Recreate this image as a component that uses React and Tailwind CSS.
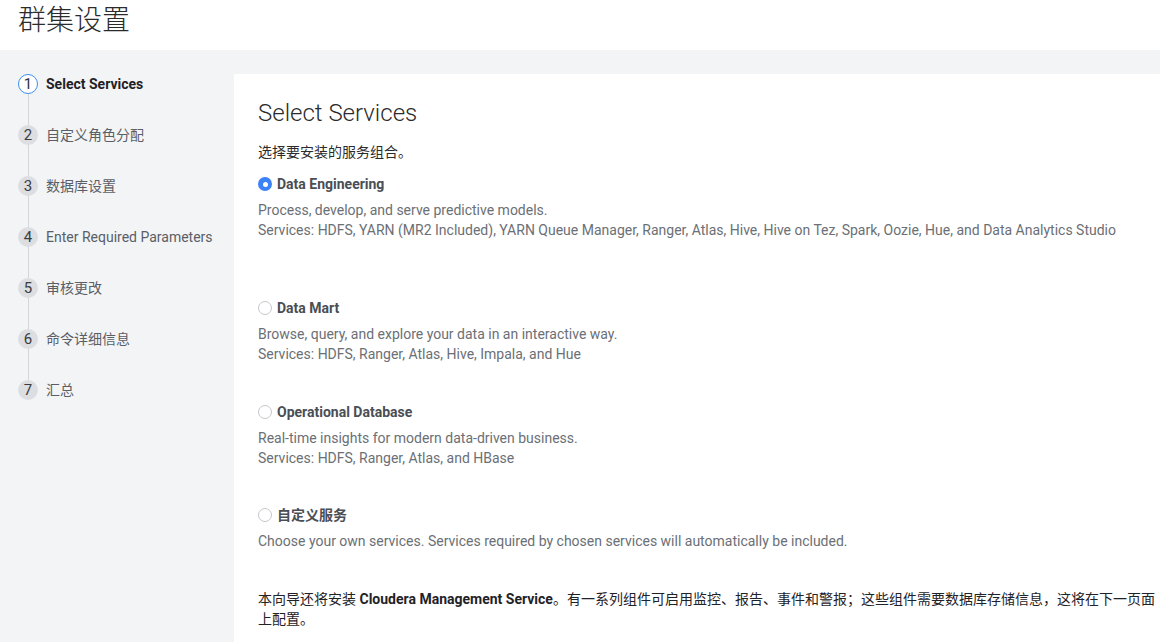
const steps = [
  { n: 1, label: 'Select Services', active: true },
  { n: 2, label: '自定义角色分配' },
  { n: 3, label: '数据库设置' },
  { n: 4, label: 'Enter Required Parameters' },
  { n: 5, label: '审核更改' },
  { n: 6, label: '命令详细信息' },
  { n: 7, label: '汇总' },
]

const options = [
  {
    name: 'Data Engineering',
    checked: true,
    gap: '',
    lines: [
      'Process, develop, and serve predictive models.',
      'Services: HDFS, YARN (MR2 Included), YARN Queue Manager, Ranger, Atlas, Hive, Hive on Tez, Spark, Oozie, Hue, and Data Analytics Studio',
    ],
  },
  {
    name: 'Data Mart',
    gap: 'mt-[58px]',
    lines: [
      'Browse, query, and explore your data in an interactive way.',
      'Services: HDFS, Ranger, Atlas, Hive, Impala, and Hue',
    ],
  },
  {
    name: 'Operational Database',
    gap: 'mt-[38px]',
    lines: [
      'Real-time insights for modern data-driven business.',
      'Services: HDFS, Ranger, Atlas, and HBase',
    ],
  },
  {
    name: '自定义服务',
    gap: 'mt-[37px]',
    lines: ['Choose your own services. Services required by chosen services will automatically be included.'],
  },
]

function Radio({ checked }) {
  if (checked) {
    return (
      <span className="w-[14px] h-[14px] rounded-full bg-[#3b82f6] flex items-center justify-center shrink-0">
        <span className="w-[5px] h-[5px] rounded-full bg-white" />
      </span>
    )
  }
  return <span className="w-[14px] h-[14px] rounded-full border border-[#c4c7cc] bg-white shrink-0" />
}

export default function App() {
  return (
    <div
      className="w-[1160px] h-[642px] overflow-hidden bg-white"
      style={{ fontFamily: "Roboto, 'Noto Sans CJK SC', sans-serif" }}
    >
      {/* Header */}
      <header className="h-[50px] flex items-center px-[18px]">
        <h1 className="text-[28px] font-light text-[#2b2b2b] leading-none -mt-[8px]">群集设置</h1>
      </header>

      <div className="flex bg-[#f3f4f6] h-[592px]">
        {/* Wizard steps */}
        <aside className="w-[234px] shrink-0 pt-[24px] pl-[18px]">
          <div className="relative">
            <div className="absolute left-[9.5px] top-[10px] bottom-[10px] w-px bg-[#d4d6da]" />
            {steps.map((s, i) => (
              <div key={s.n} className={`relative flex items-center gap-[8px] h-[20px] ${i > 0 ? 'mt-[31px]' : ''}`}>
                {s.active ? (
                  <span className="w-[20px] h-[20px] rounded-full border-[1.5px] border-[#3b8ef0] bg-white flex items-center justify-center text-[15px] text-[#2f3237]">
                    {s.n}
                  </span>
                ) : (
                  <span className="w-[20px] h-[20px] rounded-full bg-[#dcdee1] flex items-center justify-center text-[15px] text-[#3a3d42]">
                    {s.n}
                  </span>
                )}
                <span
                  className={
                    s.active
                      ? 'text-[14px] font-bold text-[#1f2227]'
                      : 'text-[14px] text-[#5a5e66]'
                  }
                >
                  {s.label}
                </span>
              </div>
            ))}
          </div>
        </aside>

        {/* Main panel */}
        <main className="flex-1 mt-[24px] bg-white pl-[24px] pt-[24px]">
          <h2 className="text-[24px] font-light text-[#2b2b2b] leading-[30px]">Select Services</h2>
          <p className="mt-[14px] text-[14px] text-[#2b2b2b] leading-[20px]">选择要安装的服务组合。</p>

          <div className="mt-[12px]">
            {options.map((o) => (
              <div key={o.name} className={o.gap}>
                <div className="flex items-center gap-[5px] h-[20px]">
                  <Radio checked={o.checked} />
                  <span className="text-[14px] font-bold text-[#4a4e55]">{o.name}</span>
                </div>
                <div className="mt-[6px] text-[14px] text-[#6b6f76] leading-[20px]">
                  {o.lines.map((l) => (
                    <p key={l}>{l}</p>
                  ))}
                </div>
              </div>
            ))}
          </div>

          <p className="mt-[38px] text-[14px] text-[#1f2227] leading-[20px] pr-[4px]">
            本向导还将安装 <b>Cloudera Management Service</b>。有一系列组件可启用监控、报告、事件和警报；这些组件需要数据库存储信息，这将在下一页面上配置。
          </p>
        </main>
      </div>
    </div>
  )
}
